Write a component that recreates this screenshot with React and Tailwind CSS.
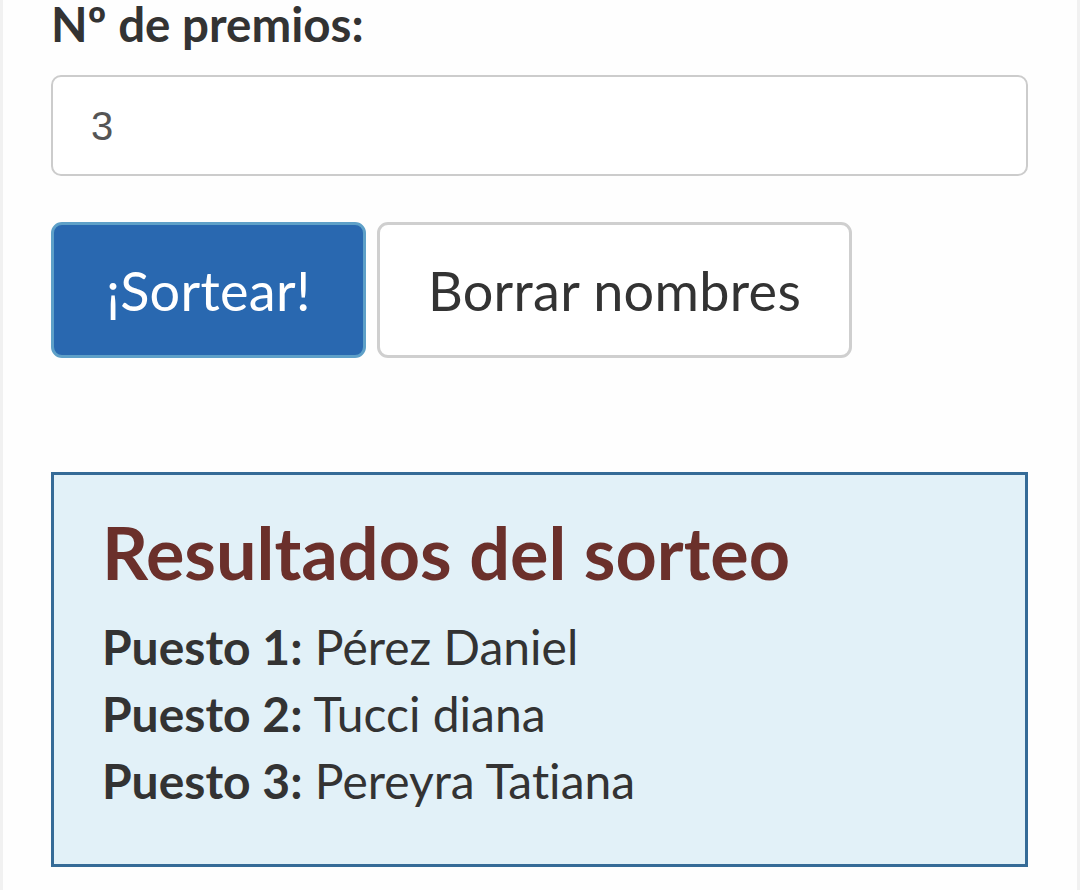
import React from 'react';

const results = [
    { place: 1, name: 'Pérez Daniel' },
    { place: 2, name: 'Tucci diana' },
    { place: 3, name: 'Pereyra Tatiana' },
];

const App = () => {
    return (
        <div className="flex w-full h-[890px] bg-[#fefefe] overflow-hidden font-['Lato',sans-serif] [font-variant-ligatures:none]">
            <div className="w-[3px] bg-[#f1f1f1]"></div>
            <div className="flex-1 pl-[48px] pr-[49px]">
                {/* Prize count */}
                <label className="block text-[47.5px] font-bold leading-[48px] text-[#333]">
                    Nº de premios:
                </label>
                <div className="mt-[27px] h-[101px] w-[977px] border-2 border-[#cccccc] rounded-[10px] bg-white flex items-center pl-[38px]">
                    <span className="text-[40px] text-[#555] font-['Liberation_Sans',Arial,sans-serif]">3</span>
                </div>

                {/* Actions */}
                <div className="mt-[46px] flex gap-[11px]">
                    <button className="h-[136px] w-[315px] rounded-[11px] bg-[#2968b0] border-[3px] border-[#5ea0c8] text-white text-[54px] tracking-[0.3px] flex items-center justify-center">
                        ¡Sortear!
                    </button>
                    <button className="h-[136px] w-[475px] rounded-[11px] bg-white border-[3px] border-[#cfcfcf] text-[#333] text-[54px] tracking-[0.3px] flex items-center justify-center">
                        Borrar nombres
                    </button>
                </div>

                {/* Results */}
                <div className="mt-[114px] h-[395px] w-[977px] border-[3px] border-[#356b97] bg-[#e2f1f8] pl-[48px] pt-[34px]">
                    <h2 className="text-[72px] font-bold leading-[86px] text-[#6b302b]">Resultados del sorteo</h2>
                    <div className="mt-[18px] text-[48px] text-[#333] leading-[67px]">
                        {results.map((r) => (
                            <div key={r.place}>
                                <span className="font-bold">Puesto {r.place}:</span> {r.name}
                            </div>
                        ))}
                    </div>
                </div>
            </div>
            <div className="w-[3px] bg-[#f1f1f1]"></div>
        </div>
    );
};

export default App;
